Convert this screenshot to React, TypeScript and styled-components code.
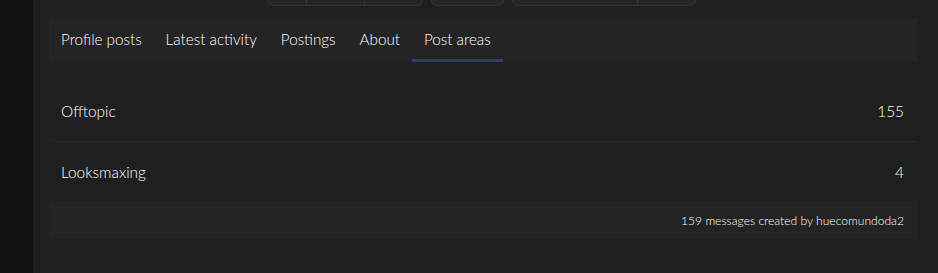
import React from "react";
import styled, { createGlobalStyle } from "styled-components";

const Global = createGlobalStyle`
  html, body { margin: 0; padding: 0; background: #1f1f1f; }
  body { font-family: "Segoe UI", Lato, "Noto Sans", sans-serif; color: #ffffff; }
`;

const Page = styled.div`
  display: flex;
  width: 938px;
  height: 273px;
  overflow: hidden;
`;

const SideStrip = styled.div`
  width: 33px;
  flex: none;
  background: #111111;
`;

const Main = styled.div`
  flex: 1;
  background: #1f1f1f;
  padding: 0 21px 0 16px;
  display: flex;
  flex-direction: column;
`;

const Toolbar = styled.div`
  height: 6px;
  display: flex;
  align-items: flex-end;
  gap: 8px;
  padding-left: 218px;
  margin-bottom: 12px;
  overflow: hidden;
`;

const ButtonGroup = styled.div`
  display: flex;
  height: 30px;
  flex: none;
  border: 1px solid #343434;
  border-radius: 6px;
  background: #262626;
  overflow: hidden;
`;

const Seg = styled.div<{ $w: number }>`
  width: ${(p) => p.$w}px;
  & + & { border-left: 1px solid #343434; }
`;

const TabBar = styled.div`
  display: flex;
  height: 44px;
  background: #242424;
`;

const Tab = styled.div<{ $active?: boolean }>`
  padding: 0 12px;
  display: flex;
  align-items: center;
  font-size: 15.23px;
  font-weight: 300;
  color: #ffffff;
  border-bottom: 3px solid ${(p) => (p.$active ? "#2b3d6e" : "transparent")};
  white-space: nowrap;
`;

const List = styled.div`
  margin-top: 18px;
  display: flex;
  flex-direction: column;
`;

const Row = styled.div`
  height: 61px;
  display: flex;
  align-items: center;
  justify-content: space-between;
  padding: 0 13px 0 12px;
  font-size: 15.4px;
  font-weight: 300;
  color: #ffffff;
  & + & { border-top: 1px solid #2a2a2a; height: 59px; }
`;

const Footer = styled.div`
  height: 38px;
  background: #232323;
  display: flex;
  align-items: center;
  justify-content: flex-end;
  padding-right: 13px;
  font-size: 12.1px;
  font-weight: 300;
  color: #ffffff;
`;

const tabs = ["Profile posts", "Latest activity", "Postings", "About", "Post areas"];
const areas = [
  { name: "Offtopic", count: 155 },
  { name: "Looksmaxing", count: 4 },
];

export default function App() {
  return (
    <>
      <Global />
      <Page>
        <SideStrip />
        <Main>
          <Toolbar>
            <ButtonGroup>
              <Seg $w={38} />
              <Seg $w={57} />
              <Seg $w={57} />
            </ButtonGroup>
            <ButtonGroup>
              <Seg $w={71} />
            </ButtonGroup>
            <ButtonGroup>
              <Seg $w={124} />
              <Seg $w={57} />
            </ButtonGroup>
          </Toolbar>
          <TabBar>
            {tabs.map((t) => (
              <Tab key={t} $active={t === "Post areas"}>
                {t}
              </Tab>
            ))}
          </TabBar>
          <List>
            {areas.map((a) => (
              <Row key={a.name}>
                <span>{a.name}</span>
                <span>{a.count}</span>
              </Row>
            ))}
            <Footer>159 messages created by huecomundoda2</Footer>
          </List>
        </Main>
      </Page>
    </>
  );
}
